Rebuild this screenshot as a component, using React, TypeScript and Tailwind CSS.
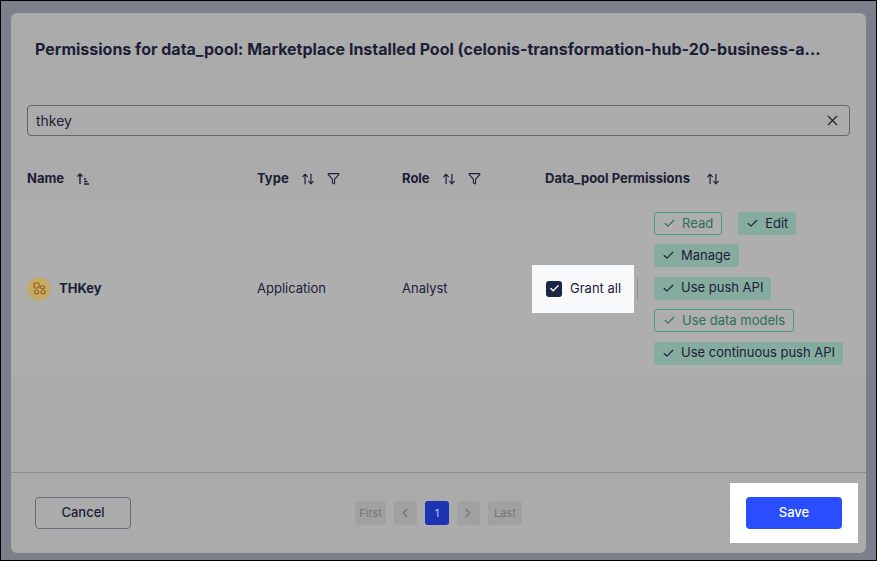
import { X, Check, ChevronLeft, ChevronRight, ArrowUpDown, Filter } from "lucide-react"

const SortUp = () => (
  <svg width="14" height="14" viewBox="0 0 14 14" fill="none" stroke="#1b2036" strokeWidth="1.4">
    <path d="M4 12V2M1.5 4.5L4 2l2.5 2.5" />
    <path d="M8 7h2M8 9.5h3.5M8 12h5" />
  </svg>
)

const chips = [
  { label: "Read", outline: true },
  { label: "Edit", outline: false },
  { label: "Manage", outline: false },
  { label: "Use push API", outline: false },
  { label: "Use data models", outline: true },
  { label: "Use continuous push API", outline: false },
]

const Chip = ({ label, outline }: { label: string; outline: boolean }) => (
  <span
    className={`inline-flex items-center gap-1.5 h-[23px] px-2 rounded-[3px] text-[13px] ${
      outline ? "border border-[#4b9a7c] text-[#2f6e57]" : "bg-[#86aca0] text-[#1b2036]"
    }`}
  >
    <Check size={13} strokeWidth={2} />
    {label}
  </span>
)

export default function App() {
  return (
    <div
      className="w-[877px] h-[561px] bg-[#7b808b] border border-black p-[12px_10px_7px_10px]"
      style={{ fontFamily: "Inter, 'Liberation Sans', sans-serif" }}
    >
      <div className="h-full bg-[#ababab] rounded-[6px] flex flex-col text-[#1b2036]">
        <h1 className="px-6 pt-[24px] text-[16px] font-bold truncate">
          Permissions for data_pool: Marketplace Installed Pool (celonis-transformation-hub-20-business-a...
        </h1>
        <div className="mx-4 mt-[44px] h-[31px] border border-[#5f6577] rounded-[4px] flex items-center justify-between px-2 text-[14px]">
          <span>thkey</span>
          <X size={17} strokeWidth={1.6} />
        </div>
        <div className="flex items-start pt-[33px] h-[65px] px-4 text-[13px] font-bold">
          <div className="w-[230px] flex items-center gap-3">Name <SortUp /></div>
          <div className="w-[145px] flex items-center gap-3">Type <ArrowUpDown size={14} /> <Filter size={13} /></div>
          <div className="w-[143px] flex items-center gap-3">Role <ArrowUpDown size={14} /> <Filter size={13} /></div>
          <div className="flex items-center gap-4">Data_pool Permissions <ArrowUpDown size={14} /></div>
        </div>
        <div className="bg-[#aeaeae] h-[175px] flex items-center px-4 text-[13px]">
          <div className="w-[230px] flex items-center gap-2 font-bold">
            <span className="w-[24px] h-[24px] rounded-full bg-[#c3aa6a] flex items-center justify-center">
              <svg width="13" height="13" viewBox="0 0 13 13" fill="none" stroke="#a0630f" strokeWidth="1.2">
                <rect x="1" y="1" width="5" height="5" rx="1" />
                <circle cx="3.5" cy="10" r="2" />
                <circle cx="10" cy="10" r="2" />
                <rect x="7.5" y="4" width="4" height="2.5" rx="0.8" />
              </svg>
            </span>
            THKey
          </div>
          <div className="w-[145px]">Application</div>
          <div className="w-[130px]">Analyst</div>
          <div className="w-[102px] h-[48px] bg-[#f8f9fb] flex items-center gap-2 pl-[14px] text-[13px]">
            <span className="w-[16px] h-[16px] rounded-[3px] bg-[#1b2545] flex items-center justify-center">
              <Check size={11} color="white" strokeWidth={3} />
            </span>
            Grant all
          </div>
          <div className="w-px h-[22px] bg-[#8f8f8f] ml-[3px] mr-4" />
          <div className="flex flex-col gap-[9px] text-[13px]">
            <div className="flex gap-4"><Chip {...chips[0]} /><Chip {...chips[1]} /></div>
            {chips.slice(2).map((c) => (
              <div key={c.label}><Chip {...c} /></div>
            ))}
          </div>
        </div>
        <div className="flex-1" />
        <div className="border-t border-[#8c8c8c] h-[81px] flex items-center justify-between pl-6 pr-2">
          <button className="w-[96px] h-[32px] border border-[#646a7a] rounded-[4px] text-[13px] font-medium">Cancel</button>
          <div className="flex items-center gap-2 text-[11px] text-[#767676] ml-[16px]">
            <span className="h-[24px] px-1 rounded-[3px] bg-[#a1a1a1] flex items-center">First</span>
            <span className="w-[23px] h-[24px] rounded-[3px] bg-[#a1a1a1] flex items-center justify-center"><ChevronLeft size={14} /></span>
            <span className="w-[24px] h-[24px] rounded-[3px] bg-[#1c33b3] text-[#b9c2ee] flex items-center justify-center">1</span>
            <span className="w-[23px] h-[24px] rounded-[3px] bg-[#a1a1a1] flex items-center justify-center"><ChevronRight size={14} /></span>
            <span className="h-[24px] px-1.5 rounded-[3px] bg-[#a1a1a1] flex items-center">Last</span>
          </div>
          <div className="w-[128px] h-[60px] bg-white flex items-center justify-center">
            <button className="w-[96px] h-[32px] bg-[#2a4dff] rounded-[4px] text-white text-[13px] font-medium">Save</button>
          </div>
        </div>
      </div>
    </div>
  )
}
